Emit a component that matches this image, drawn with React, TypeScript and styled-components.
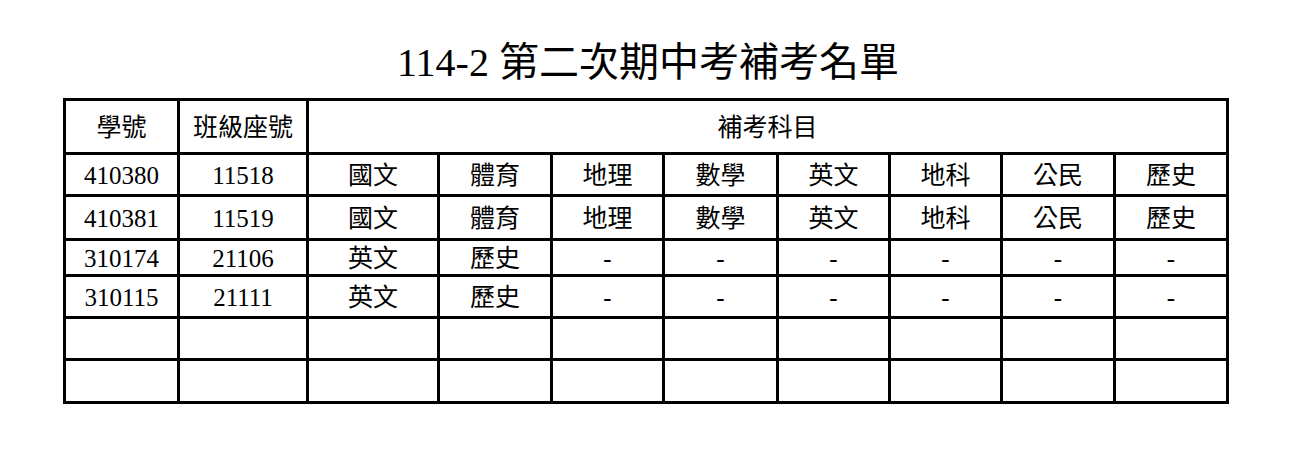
import React from "react";
import styled, { createGlobalStyle } from "styled-components";

const Global = createGlobalStyle`
  html, body { margin: 0; padding: 0; background: #fff; }
  body { font-family: "Liberation Serif", "Noto Sans CJK TC", serif; color: #000; }
`;

const Page = styled.div`
  width: 1296px;
  padding: 40px 0 0 63px;
  box-sizing: border-box;
`;

const Title = styled.h1`
  width: 1166px;
  margin: 0 0 12px;
  font-size: 40px;
  line-height: 46px;
  font-weight: normal;
  text-align: center;
  padding-left: 4px;
  box-sizing: border-box;
`;

const COLS = [114, 129, 131, 113, 112, 114, 112, 112, 113, 113];
const ROWS = [54, 42, 44, 36, 42, 42, 43];

const Grid = styled.div`
  display: grid;
  width: 1166px;
  box-sizing: border-box;
  grid-template-columns: ${COLS.map((c) => `${c}px`).join(" ")};
  grid-template-rows: ${ROWS.map((r) => `${r}px`).join(" ")};
  border-left: 3px solid #000;
  border-top: 3px solid #000;
`;

const Cell = styled.div<{ $span?: number }>`
  box-sizing: border-box;
  border-right: 3px solid #000;
  border-bottom: 3px solid #000;
  display: flex;
  align-items: center;
  justify-content: center;
  font-size: 25px;
  line-height: 1;
  padding-top: 2px;
  grid-column: ${(p) => (p.$span ? `span ${p.$span}` : "auto")};
  white-space: nowrap;
`;

const rows: [string, string, string[]][] = [
  ["410380", "11518", ["國文", "體育", "地理", "數學", "英文", "地科", "公民", "歷史"]],
  ["410381", "11519", ["國文", "體育", "地理", "數學", "英文", "地科", "公民", "歷史"]],
  ["310174", "21106", ["英文", "歷史", "-", "-", "-", "-", "-", "-"]],
  ["310115", "21111", ["英文", "歷史", "-", "-", "-", "-", "-", "-"]],
  ["", "", ["", "", "", "", "", "", "", ""]],
  ["", "", ["", "", "", "", "", "", "", ""]],
];

export default function App() {
  return (
    <Page>
      <Global />
      <Title>114-2 第二次期中考補考名單</Title>
      <Grid>
        <Cell>學號</Cell>
        <Cell>班級座號</Cell>
        <Cell $span={8}>補考科目</Cell>
        {rows.map(([id, cls, subs], i) => (
          <React.Fragment key={i}>
            <Cell>{id}</Cell>
            <Cell>{cls}</Cell>
            {subs.map((s, j) => (
              <Cell key={j}>{s}</Cell>
            ))}
          </React.Fragment>
        ))}
      </Grid>
    </Page>
  );
}
